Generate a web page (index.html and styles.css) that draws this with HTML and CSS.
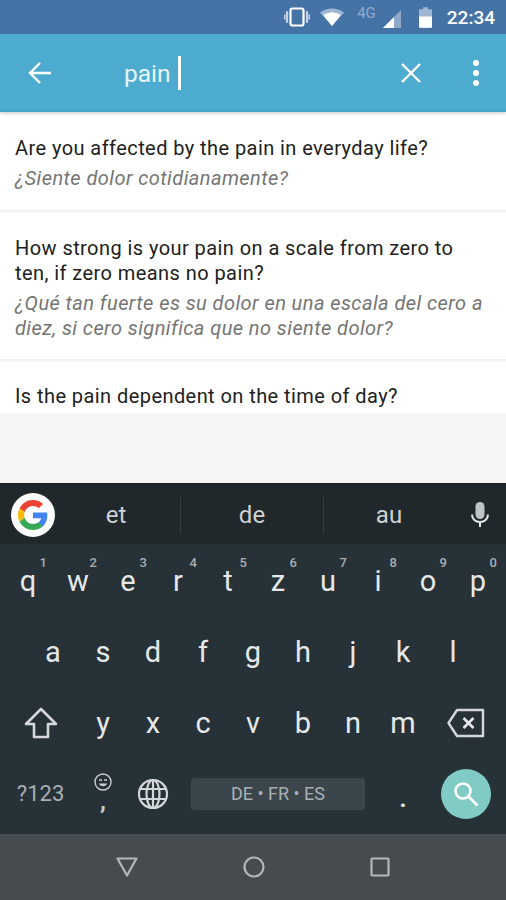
FILE: index.html
```html
<!DOCTYPE html>
<html lang="en">

<head>
    <meta charset="UTF-8" />
    <meta name="viewport" content="width=device-width, initial-scale=1.0" />
    <title>Search questions</title>
    <link rel="stylesheet" href="styles.css">
</head>

<body>

<div class="phone">
    <div class="status">
        <svg class="status__icon" width="26" height="20" viewBox="0 0 26 20">
            <rect x="6.500" y="1.500" width="13" height="17" rx="2" fill="none" stroke="#fff" stroke-width="2.200"/>
            <path d="M3 5v10M23 5v10" stroke="#c3d2e4" stroke-width="2.200" stroke-linecap="round"/>
            <path d="M0.800 8v4M25.200 8v4" stroke="#c3d2e4" stroke-width="1.500" stroke-linecap="round"/>
        </svg>
        <svg class="status__icon status__wifi" width="24" height="18" viewBox="0 0 24 18">
            <path d="M0 4.500Q12 -3.500 24 4.500L12 18Z" fill="#9fb7d3"/>
            <path d="M3.200 7Q12 1.500 20.800 7L12 18Z" fill="#fff"/>
        </svg>
        <span class="status__net">4G</span>
        <svg class="status__icon status__signal" width="18" height="18" viewBox="0 0 18 18">
            <path d="M0 18L18 0V18Z" fill="#8ea9ca"/>
            <path d="M0 18L11 7V18Z" fill="#fff"/>
        </svg>
        <svg class="status__icon status__battery" width="13" height="21" viewBox="0 0 14 22">
            <path d="M4.500 0h5v2H13a1 1 0 0 1 1 1v18a1 1 0 0 1-1 1H1a1 1 0 0 1-1-1V3a1 1 0 0 1 1-1h3.500z" fill="#9fb7d3"/>
            <path d="M0 10h14v11a1 1 0 0 1-1 1H1a1 1 0 0 1-1-1z" fill="#fff"/>
        </svg>
        <span class="status__time">22:34</span>
    </div>

    <header class="toolbar">
        <svg class="toolbar__back" width="24" height="24" viewBox="0 0 24 24">
            <path d="M23 12H2M12 2L2 12l10 10" fill="none" stroke="#fff" stroke-width="2.400"/>
        </svg>
        <div class="toolbar__query">pain<span class="toolbar__caret"></span></div>
        <svg class="toolbar__clear" width="20" height="20" viewBox="0 0 20 20">
            <path d="M1 1l18 18M19 1L1 19" stroke="#fff" stroke-width="2.400"/>
        </svg>
        <div class="toolbar__more"><i></i><i></i><i></i></div>
    </header>

    <main class="results">
        <div class="question question--first">
            <p class="question__en">Are you affected by the pain in everyday life?</p>
            <p class="question__es">¿Siente dolor cotidianamente?</p>
        </div>
        <div class="question">
            <p class="question__en">How strong is your pain on a scale from zero to ten, if zero means no pain?</p>
            <p class="question__es">¿Qué tan fuerte es su dolor en una escala del cero a diez, si cero significa que no siente dolor?</p>
        </div>
        <div class="question question--last">
            <p class="question__en">Is the pain dependent on the time of day?</p>
        </div>
    </main>

    <section class="keyboard">
        <div class="suggest">
            <div class="suggest__logo">
                <svg width="30" height="30" viewBox="0 0 48 48">
                    <path fill="#EA4335" d="M24 9.500c3.540 0 6.710 1.220 9.210 3.600l6.850-6.850C35.900 2.380 30.470 0 24 0 14.620 0 6.510 5.380 2.560 13.220l7.980 6.190C12.430 13.720 17.740 9.500 24 9.500z"/>
                    <path fill="#4285F4" d="M46.980 24.550c0-1.570-.15-3.090-.38-4.550H24v9.020h12.940c-.58 2.960-2.260 5.480-4.780 7.180l7.730 6c4.510-4.180 7.090-10.360 7.090-17.650z"/>
                    <path fill="#FBBC05" d="M10.530 28.590c-.48-1.450-.76-2.990-.76-4.590s.27-3.140.76-4.590l-7.980-6.190C.92 16.460 0 20.120 0 24c0 3.880.92 7.540 2.560 10.780l7.970-6.190z"/>
                    <path fill="#34A853" d="M24 48c6.480 0 11.930-2.130 15.890-5.810l-7.730-6c-2.150 1.450-4.920 2.300-8.160 2.300-6.260 0-11.570-4.220-13.470-9.910l-7.980 6.190C6.510 42.620 14.620 48 24 48z"/>
                </svg>
            </div>
            <span class="suggest__word suggest__word--first">et</span>
            <span class="suggest__word">de</span>
            <span class="suggest__word">au</span>
            <svg class="suggest__mic" width="20" height="28" viewBox="0 0 20 28">
                <rect x="5.500" y="1" width="9" height="17" rx="4.500" fill="#bfc3c5"/>
                <path d="M2 13.500c0 4.500 3.500 7.500 8 7.500s8-3 8-7.500M10 21v5" fill="none" stroke="#e4e6e7" stroke-width="2"/>
            </svg>
        </div>

        <div class="keys">
            <div class="key key--letter"><sup>1</sup>q</div>
            <div class="key key--letter"><sup>2</sup>w</div>
            <div class="key key--letter"><sup>3</sup>e</div>
            <div class="key key--letter"><sup>4</sup>r</div>
            <div class="key key--letter"><sup>5</sup>t</div>
            <div class="key key--letter"><sup>6</sup>z</div>
            <div class="key key--letter"><sup>7</sup>u</div>
            <div class="key key--letter"><sup>8</sup>i</div>
            <div class="key key--letter"><sup>9</sup>o</div>
            <div class="key key--letter"><sup>0</sup>p</div>

            <div class="key key--letter key--indent">a</div>
            <div class="key key--letter">s</div>
            <div class="key key--letter">d</div>
            <div class="key key--letter">f</div>
            <div class="key key--letter">g</div>
            <div class="key key--letter">h</div>
            <div class="key key--letter">j</div>
            <div class="key key--letter">k</div>
            <div class="key key--letter">l</div>

            <div class="key key--wide">
                <svg width="34" height="32" viewBox="0 0 34 32">
                    <path d="M17 2L2 17h8v13h14V17h8z" fill="none" stroke="#d5d8da" stroke-width="2.600" stroke-linejoin="round"/>
                </svg>
            </div>
            <div class="key key--letter">y</div>
            <div class="key key--letter">x</div>
            <div class="key key--letter">c</div>
            <div class="key key--letter">v</div>
            <div class="key key--letter">b</div>
            <div class="key key--letter">n</div>
            <div class="key key--letter">m</div>
            <div class="key key--wide">
                <svg width="38" height="30" viewBox="0 0 38 30">
                    <path d="M10 2h26v26H10L1.500 15z" fill="none" stroke="#d5d8da" stroke-width="2.400" stroke-linejoin="round"/>
                    <path d="M16.500 10l10 10M26.500 10l-10 10" stroke="#e4e6e7" stroke-width="2.600"/>
                </svg>
            </div>

            <div class="key key--wide key--symbols">?123</div>
            <div class="key key--emoji">
                <svg width="18" height="18" viewBox="0 0 18 18">
                    <circle cx="9" cy="9" r="8" fill="none" stroke="#c9cdcf" stroke-width="1.400"/>
                    <path d="M5 7h3M10 7h3" stroke="#c9cdcf" stroke-width="1.400"/>
                    <path d="M5 10.500c1 3.500 7 3.500 8 0z" fill="#c9cdcf"/>
                </svg>
                <span>,</span>
            </div>
            <div class="key">
                <svg width="32" height="32" viewBox="0 0 32 32" fill="none" stroke="#d5d8da" stroke-width="2.200">
                    <circle cx="16" cy="16" r="14"/>
                    <ellipse cx="16" cy="16" rx="6.500" ry="14"/>
                    <path d="M16 2v28M3.500 11h25M3.500 21h25"/>
                </svg>
            </div>
            <div class="key key--space"><span class="key__bar">DE • FR • ES</span></div>
            <div class="key key--dot">.</div>
            <div class="key key--wide">
                <div class="key__search">
                    <svg width="28" height="28" viewBox="0 0 28 28" fill="none" stroke="#fff" stroke-width="2.600">
                        <circle cx="11" cy="11" r="7.500"/>
                        <path d="M16.500 16.500L25.500 25.500"/>
                    </svg>
                </div>
            </div>
        </div>
    </section>

    <nav class="navbar">
        <svg width="22" height="20" viewBox="0 0 22 20"><path d="M1.500 1.500h19L11 18.500z" fill="none" stroke="#b4b7b9" stroke-width="2.200" stroke-linejoin="round"/></svg>
        <svg width="22" height="22" viewBox="0 0 22 22"><circle cx="11" cy="11" r="9.500" fill="none" stroke="#b4b7b9" stroke-width="2.200"/></svg>
        <svg width="20" height="20" viewBox="0 0 20 20"><rect x="1.500" y="1.500" width="17" height="17" rx="1" fill="none" stroke="#b4b7b9" stroke-width="2.200"/></svg>
    </nav>
</div>

</body>
</html>
```

FILE: styles.css
```css
*,
*::before,
*::after {
    box-sizing: border-box;
}

html,
body,
p {
    margin: 0;
    padding: 0;
}

body {
    font-family: 'Roboto', sans-serif;
    background: #f5f5f5;
}

.phone {
    width: 506px;
    height: 900px;
    display: flex;
    flex-direction: column;
    overflow: hidden;
}

.status {
    height: 34px;
    flex: none;
    background: #4673a6;
    display: flex;
    align-items: center;
    justify-content: flex-end;
    padding-right: 11px;
    color: #fff;
}
.status__wifi {
    margin-left: 10px;
}
.status__net {
    font-size: 15px;
    color: #8ea9ca;
    margin: -8px 0 0 13px;
}
.status__signal {
    margin: 3px 0 0 7px;
}
.status__battery {
    margin-left: 18px;
}
.status__time {
    font-size: 19px;
    font-weight: 500;
    margin-left: 15px;
}

.toolbar {
    height: 78px;
    flex: none;
    background: #4dabcf;
    border-bottom: 2px solid #43a5cb;
    box-shadow: 0 2px 3px rgba(0, 0, 0, 0.16);
    display: flex;
    align-items: center;
    padding-top: 2px;
    position: relative;
}
.toolbar__back {
    margin-left: 28px;
}
.toolbar__query {
    font-size: 24.500px;
    color: #e6f5fa;
    margin-left: 72px;
    flex: 1;
    display: flex;
    align-items: center;
}
.toolbar__caret {
    width: 3px;
    height: 34px;
    background: #fff;
    margin-left: 7px;
}
.toolbar__clear {
    flex: none;
}
.toolbar__more {
    width: 6px;
    margin: 0 27px 0 52px;
    display: flex;
    flex-direction: column;
    gap: 4px;
}
.toolbar__more i {
    width: 6px;
    height: 6px;
    border-radius: 50%;
    background: #fff;
}

.results {
    flex: 1;
    background: #f5f5f5;
}
.question {
    background: #fff;
    padding: 23px 15px 18px;
    margin-bottom: 2px;
    border-bottom: 1px solid #eee;
}
.question--first {
    padding-top: 24px;
    padding-bottom: 19px;
}
.question--last {
    padding-top: 22px;
    padding-bottom: 4px;
    margin: 0;
    border: 0;
}
.question__en {
    font-size: 20px;
    letter-spacing: 0.430px;
    line-height: 25px;
    color: #212121;
}
.question__es {
    font-size: 20px;
    letter-spacing: 0.430px;
    line-height: 25px;
    font-style: italic;
    color: #757575;
    margin-top: 5px;
}

.keyboard {
    height: 351px;
    flex: none;
    background: #263238;
    border-top: 2px solid #1c2225;
}
.suggest {
    height: 59px;
    background: #21282c;
    display: grid;
    grid-template-columns: 66px 115px 143px 1fr 52px;
    align-items: center;
}
.suggest__logo {
    width: 44px;
    height: 44px;
    margin-left: 11px;
    border-radius: 50%;
    background: #fff;
    display: flex;
    align-items: center;
    justify-content: center;
}
.suggest__word {
    font-size: 24px;
    color: #cfd2d4;
    text-align: center;
    line-height: 36px;
    border-right: 1px solid #363d41;
}
.suggest__word--first {
    padding-right: 14px;
}
.suggest__word:nth-of-type(3) {
    border-right: 0;
}
.suggest__mic {
    justify-self: center;
}

.keys {
    display: grid;
    grid-template-columns: repeat(20, 1fr);
    grid-auto-rows: 71px;
    padding: 1px 3px 0;
}
.key {
    grid-column: span 2;
    display: flex;
    align-items: center;
    justify-content: center;
    position: relative;
    color: #e6e8e9;
}
.key--letter {
    font-size: 29px;
}
.key--letter sup {
    position: absolute;
    top: 10px;
    right: 6px;
    font-size: 13px;
    font-weight: 500;
    line-height: 16px;
    color: #a9aeb1;
}
.key--indent {
    grid-column: 2 / span 2;
}
.key--wide {
    grid-column: span 3;
}
.key--symbols {
    font-size: 22px;
    color: #a9aeb1;
}
.key--emoji {
    flex-direction: column;
    font-size: 24px;
    font-weight: 700;
    line-height: 14px;
    color: #c9cdcf;
    padding-bottom: 6px;
    gap: 3px;
}
.key--space {
    grid-column: span 8;
    padding: 0 13px;
}
.key__bar {
    width: 100%;
    height: 32px;
    background: #3b464c;
    border-radius: 3px;
    font-size: 18px;
    color: #a9b0b3;
    display: flex;
    align-items: center;
    justify-content: center;
}
.key--dot {
    font-size: 24px;
    font-weight: 700;
    padding-top: 10px;
}
.key__search {
    width: 50px;
    height: 50px;
    border-radius: 50%;
    background: #80cbc4;
    display: flex;
    align-items: center;
    justify-content: center;
}

.navbar {
    height: 66px;
    flex: none;
    background: #454b4f;
    display: flex;
    justify-content: center;
    align-items: center;
    gap: 105px;
}
```
